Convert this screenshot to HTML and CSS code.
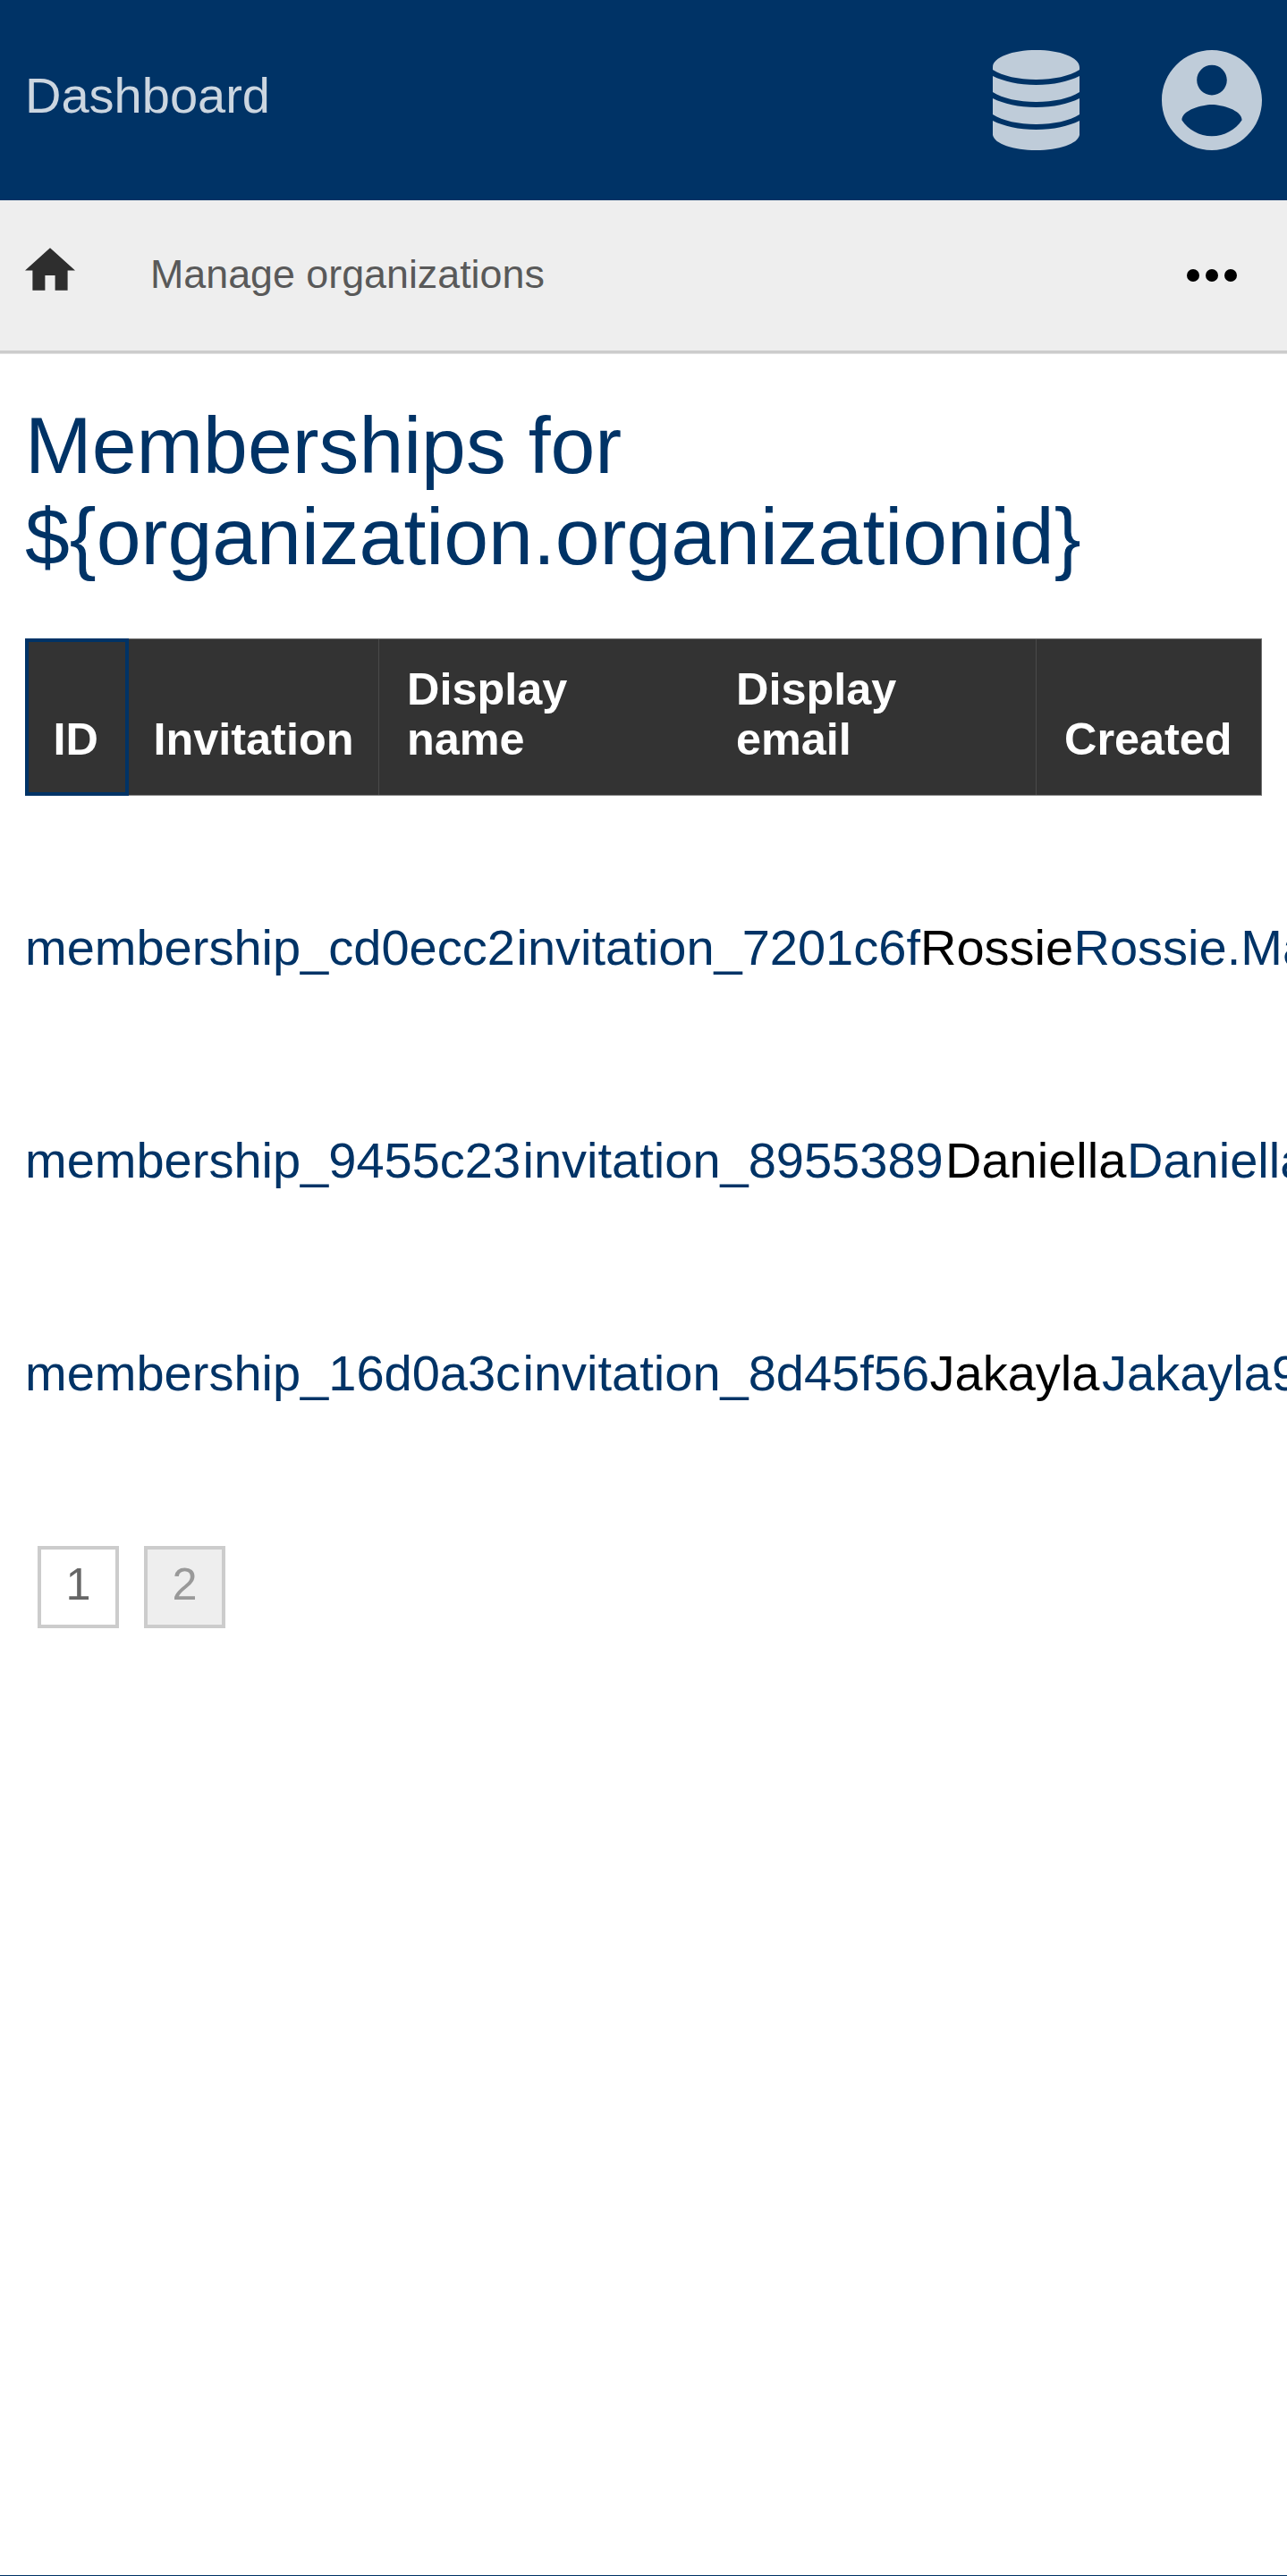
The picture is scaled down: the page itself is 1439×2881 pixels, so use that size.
FILE: index.html
```html
<!DOCTYPE html>
<html lang="en">
<head>
<meta charset="utf-8">
<title>Memberships</title>
<link rel="stylesheet" href="styles.css">
</head>
<body>
<header class="topbar">
  <a class="brand">Dashboard</a>
  <div class="tools">
    <svg class="icon-db" viewBox="0 0 97 112"><path d="M0 19C0 8 22 0 48.500 0S97 8 97 19V22C86 29 68 33 48.500 33S11 29 0 22ZM0 29C12 35 29 39 48.500 39S85 35 97 29V47C86 54 68 58 48.500 58S11 54 0 47ZM0 54C12 60 29 64 48.500 64S85 60 97 54V72C86 79 68 83 48.500 83S11 79 0 72ZM0 79C12 85 29 89 48.500 89S85 85 97 79V95C95 105 74 112 48.500 112S2 105 0 95Z"/></svg>
    <svg class="icon-user" viewBox="2 2 20 20"><path d="M12 2C6.480 2 2 6.480 2 12s4.480 10 10 10 10-4.480 10-10S17.520 2 12 2zm0 3c1.660 0 3 1.340 3 3s-1.340 3-3 3-3-1.340-3-3 1.340-3 3-3zm0 14.200c-2.500 0-4.710-1.280-6-3.220.030-1.990 4-3.080 6-3.080 1.990 0 5.970 1.090 6 3.080-1.290 1.940-3.500 3.220-6 3.220z"/></svg>
  </div>
</header>
<nav class="subbar">
  <svg class="icon-home" viewBox="2 3 20 17"><path d="M10 20v-6h4v6h5v-8h3L12 3 2 12h3v8z"/></svg>
  <a class="crumb">Manage organizations</a>
  <svg class="icon-more" viewBox="0 0 56 14"><circle cx="7" cy="7" r="7"/><circle cx="28" cy="7" r="7"/><circle cx="49" cy="7" r="7"/></svg>
</nav>
<main class="content">
  <h1 class="title">Memberships for ${organization.organizationid}</h1>
  <div class="thead">
    <div class="th th-active">ID</div>
    <div class="th th-invitation">Invitation</div>
    <div class="th">Display name</div>
    <div class="th th-email">Display email</div>
    <div class="th">Created</div>
  </div>
  <div class="rows">
    <div class="row row-rossie"><a>membership_cd0ecc2</a><a>invitation_7201c6f</a><span>Rossie</span><a>Rossie.Ma</a></div>
    <div class="row row-daniella"><a>membership_9455c23</a><a>invitation_8955389</a><span>Daniella</span><a>Daniella</a></div>
    <div class="row row-jakayla"><a>membership_16d0a3c</a><a>invitation_8d45f56</a><span>Jakayla</span><a>Jakayla9</a></div>
  </div>
  <div class="pager">
    <a class="page">1</a>
    <a class="page page-off">2</a>
  </div>
</main>
<footer class="footer"></footer>
</body>
</html>
```
FILE: styles.css
```css
* { box-sizing: border-box; }
body {
  margin: 0;
  height: 2881px;
  display: flex;
  flex-direction: column;
  overflow: hidden;
  background: #fff;
  color: #000;
  font: 56px/64px "Liberation Sans", Arial, sans-serif;
}
.topbar {
  height: 224px;
  padding: 0 28px;
  display: flex;
  align-items: center;
  justify-content: space-between;
  background: #003366;
}
.brand { color: #ccd6e0; padding-bottom: 10px; }
.tools { display: flex; gap: 92px; fill: #bfccd9; }
.icon-db { width: 97px; height: 112px; }
.icon-user { width: 112px; height: 112px; }
.subbar {
  height: 172px;
  padding: 0 56px 3px 28px;
  display: flex;
  align-items: center;
  background: #eee;
  border-bottom: 1px solid #e0e0e0;
  box-shadow: inset 0 -3px #ccc;
}
.icon-home { width: 56px; height: 48px; margin-bottom: 14px; fill: #2e2e2e; }
.crumb { margin: 0 0 4px 84px; font-size: 44.8px; line-height: 52px; color: #595959; }
.icon-more { width: 56px; height: 14px; margin-left: auto; }
.content { flex: 1; padding: 51px 28px 0; }
.title {
  margin: 0 0 63px;
  font-size: 89.6px;
  line-height: 102px;
  font-weight: 400;
  color: #003366;
}
.thead {
  height: 176px;
  display: grid;
  grid-template-columns: 116px 279px 368px 367px 1fr;
  background: #333;
  border: 1px solid #707070;
  border-bottom-color: #858585;
  border-left: 0;
}
.th {
  display: flex;
  align-items: flex-end;
  padding: 0 20px 34px 31px;
  border-left: 1px solid #4a4a4a;
  color: #fff;
  font-size: 50.4px;
  line-height: 56px;
  font-weight: 700;
}
.th-active {
  margin: -1px 0;
  padding: 0 0 35px 31.5px;
  border: 0;
  box-shadow: inset 0 0 0 4px #003366;
}
.th-invitation { padding-left: 27.5px; border: 0; }
.th-email { border-left-color: #333; }
.rows { padding-top: 51px; }
.row { height: 238px; line-height: 238px; display: grid; white-space: nowrap; }
.row a { color: #003366; }
.row-rossie { grid-template-columns: 549.5px 451.5px 171.5px 1fr; }
.row-daniella { grid-template-columns: 556.5px 472.5px 203px 1fr; }
.row-jakayla { grid-template-columns: 556.5px 455px 192.5px 1fr; }
.pager { display: flex; gap: 28px; padding: 74px 14px 0; }
.page {
  width: 91px;
  height: 92px;
  border: 4px solid #ccc;
  text-align: center;
  font-size: 50.4px;
  line-height: 78px;
  color: #666;
}
.page-off { background: #eee; color: #999; }
.footer { height: 1px; background: #003366; }
```
